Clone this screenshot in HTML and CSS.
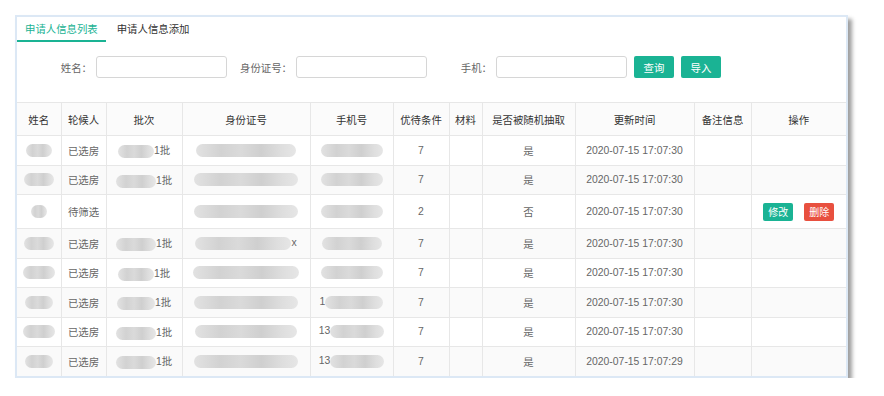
FILE: index.html
```html
<!DOCTYPE html>
<html lang="zh-CN">
<head>
    <meta charset="UTF-8">
    <meta name="viewport" content="width=device-width, initial-scale=1.0">
    <title>申请人信息列表</title>
    <link rel="stylesheet" href="styles.css">
</head>
<body>
    <div class="window">
        <div class="tabs">
            <span class="tab active">申请人信息列表</span>
            <span class="tab">申请人信息添加</span>
        </div>

        <div class="search">
            <label class="field-label">姓名：</label>
            <input class="field" type="text">
            <label class="field-label">身份证号：</label>
            <input class="field" type="text">
            <label class="field-label">手机：</label>
            <input class="field" type="text">
            <button class="btn btn-green">查询</button>
            <button class="btn btn-green">导入</button>
        </div>

        <table class="list">
            <colgroup>
                <col style="width:44px"><col style="width:45px"><col style="width:76px">
                <col style="width:128px"><col style="width:83px"><col style="width:56px">
                <col style="width:33px"><col style="width:93px"><col style="width:119px">
                <col style="width:57px"><col style="width:95px">
            </colgroup>
            <thead>
                <tr>
                    <th>姓名</th><th>轮候人</th><th>批次</th><th>身份证号</th><th>手机号</th>
                    <th>优待条件</th><th>材料</th><th>是否被随机抽取</th><th>更新时间</th>
                    <th>备注信息</th><th>操作</th>
                </tr>
            </thead>
            <tbody>
                <tr>
                    <td><span class="mask" style="width:26px"></span></td>
                    <td>已选房</td>
                    <td><span class="mask" style="width:36px"></span>1批</td>
                    <td><span class="mask" style="width:100px"></span></td>
                    <td><span class="mask" style="width:62px"></span></td>
                    <td>7</td><td></td><td>是</td><td>2020-07-15 17:07:30</td><td></td><td></td>
                </tr>
                <tr>
                    <td><span class="mask" style="width:30px"></span></td>
                    <td>已选房</td>
                    <td><span class="mask" style="width:40px"></span>1批</td>
                    <td><span class="mask" style="width:104px"></span></td>
                    <td><span class="mask" style="width:62px"></span></td>
                    <td>7</td><td></td><td>是</td><td>2020-07-15 17:07:30</td><td></td><td></td>
                </tr>
                <tr class="tall">
                    <td><span class="mask" style="width:16px"></span></td>
                    <td>待筛选</td>
                    <td></td>
                    <td><span class="mask" style="width:104px"></span></td>
                    <td><span class="mask" style="width:62px"></span></td>
                    <td>2</td><td></td><td>否</td><td>2020-07-15 17:07:30</td><td></td>
                    <td class="ops">
                        <button class="btn-sm btn-green">修改</button>
                        <button class="btn-sm btn-red">删除</button>
                    </td>
                </tr>
                <tr>
                    <td><span class="mask" style="width:30px"></span></td>
                    <td>已选房</td>
                    <td><span class="mask" style="width:40px"></span>1批</td>
                    <td><span class="mask" style="width:96px"></span>x</td>
                    <td><span class="mask" style="width:60px"></span></td>
                    <td>7</td><td></td><td>是</td><td>2020-07-15 17:07:30</td><td></td><td></td>
                </tr>
                <tr>
                    <td><span class="mask" style="width:32px"></span></td>
                    <td>已选房</td>
                    <td><span class="mask" style="width:36px"></span>1批</td>
                    <td><span class="mask" style="width:106px"></span></td>
                    <td><span class="mask" style="width:62px"></span></td>
                    <td>7</td><td></td><td>是</td><td>2020-07-15 17:07:30</td><td></td><td></td>
                </tr>
                <tr>
                    <td><span class="mask" style="width:28px"></span></td>
                    <td>已选房</td>
                    <td><span class="mask" style="width:38px"></span>1批</td>
                    <td><span class="mask" style="width:104px"></span></td>
                    <td>1<span class="mask" style="width:58px"></span></td>
                    <td>7</td><td></td><td>是</td><td>2020-07-15 17:07:30</td><td></td><td></td>
                </tr>
                <tr>
                    <td><span class="mask" style="width:32px"></span></td>
                    <td>已选房</td>
                    <td><span class="mask" style="width:40px"></span>1批</td>
                    <td><span class="mask" style="width:102px"></span></td>
                    <td>13<span class="mask" style="width:54px"></span></td>
                    <td>7</td><td></td><td>是</td><td>2020-07-15 17:07:30</td><td></td><td></td>
                </tr>
                <tr>
                    <td><span class="mask" style="width:28px"></span></td>
                    <td>已选房</td>
                    <td><span class="mask" style="width:40px"></span>1批</td>
                    <td><span class="mask" style="width:104px"></span></td>
                    <td>13<span class="mask" style="width:54px"></span></td>
                    <td>7</td><td></td><td>是</td><td>2020-07-15 17:07:29</td><td></td><td></td>
                </tr>
            </tbody>
        </table>
    </div>
</body>
</html>
```

FILE: styles.css
```css
body {
    margin: 0;
    background: #fff;
    font-family: "Liberation Sans", "Noto Sans CJK SC", sans-serif;
    font-size: 10.4px;
    color: #666;
}

.window {
    margin: 15px 0 0 15px;
    width: 829px;
    height: 359px;
    border: 2px solid #dce8f5;
    background: #fff;
    box-shadow: 4px 4px 4px rgba(0, 0, 0, 0.38);
    overflow: hidden;
}

.tabs {
    display: flex;
    height: 25px;
}

.tab {
    display: flex;
    align-items: center;
    padding: 0 8px;
    color: #333;
    border-bottom: 2px solid transparent;
    margin-right: 3px;
}

.tab.active {
    color: #1ab394;
    border-bottom-color: #1ab394;
}

.search {
    display: flex;
    align-items: center;
    padding: 14px 0 0 10px;
    height: 22px;
}

.field-label {
    width: 65px;
    text-align: right;
    margin-right: 4px;
    color: #666;
}

.field {
    width: 131px;
    height: 22px;
    box-sizing: border-box;
    border: 1px solid #d6d6d6;
    border-radius: 3px;
    padding: 0 4px;
    outline: none;
}

.btn {
    height: 22px;
    width: 40px;
    border: none;
    border-radius: 2px;
    color: #fff;
    font-size: 10.4px;
    font-family: inherit;
    margin-left: 7px;
    padding: 0;
}

.btn-green {
    background: #1ab394;
}

.btn-red {
    background: #e8503f;
}

.list {
    margin-top: 24px;
    width: 829px;
    border-collapse: collapse;
    table-layout: fixed;
}

.list th,
.list td {
    border: 1px solid #e7e7e7;
    text-align: center;
    white-space: nowrap;
    overflow: hidden;
    padding: 0;
}

.list th {
    height: 32px;
    font-weight: normal;
    color: #333;
    background: #fbfbfb;
}

.list td {
    height: 28.5px;
}

.list tr > :first-child {
    border-left: none;
}

.list tr > :last-child {
    border-right: none;
}

.list tbody tr:nth-child(even) {
    background: #fafafa;
}

.list tr.tall td {
    height: 33px;
}

.mask {
    display: inline-block;
    height: 13px;
    vertical-align: middle;
    border-radius: 7px;
    background: linear-gradient(90deg, #e2e2e2 0%, #d2d2d2 25%, #dadada 45%, #cfcfcf 65%, #dedede 85%, #e6e6e6 100%);
    filter: blur(0.6px);
}

.btn-sm {
    width: 30px;
    height: 18px;
    border: none;
    border-radius: 2px;
    color: #fff;
    font-size: 10px;
    font-family: inherit;
    padding: 0;
    margin: 0 4px;
    vertical-align: middle;
}
```
